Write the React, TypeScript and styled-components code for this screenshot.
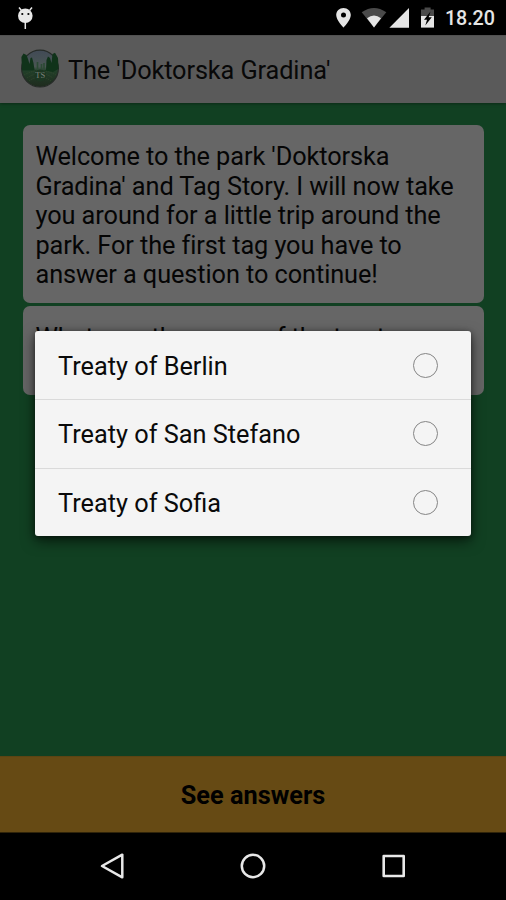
import React from 'react';
import styled, { createGlobalStyle } from 'styled-components';

const GlobalStyle = createGlobalStyle`
  * { box-sizing: border-box; }
  body { margin: 0; background: #000; font-family: Roboto, sans-serif; }
`;

const Screen = styled.div`
  position: relative;
  display: flex;
  flex-direction: column;
  width: 506px;
  height: 900px;
  overflow: hidden;
  background: #000;
`;

const StatusBar = styled.div`
  display: flex;
  justify-content: space-between;
  height: 35px;
  padding: 0 10px 0 16px;
  flex: none;
`;

const StatusIcons = styled.div`
  display: flex;
`;

const Clock = styled.span`
  width: 51px;
  font-size: 19.7px;
  font-weight: 500;
  line-height: 38px;
  letter-spacing: -0.1px;
  color: #e5e5e5;
  white-space: nowrap;
`;

const AppBar = styled.header`
  display: flex;
  align-items: center;
  gap: 8px;
  height: 67.5px;
  flex: none;
  padding-left: 20px;
  background: #5a5a5a;
  border-top: 1px solid #515151;
  box-shadow: 0 1px 3px rgba(0, 0, 0, 0.35);
  z-index: 1;
`;

const Title = styled.h1`
  margin: 3px 0 0;
  font-size: 25.3px;
  font-weight: 400;
  line-height: 30px;
  letter-spacing: -0.1px;
  color: #080808;
`;

const Content = styled.main`
  display: flex;
  flex-direction: column;
  gap: 3px;
  flex: 1;
  padding: 22.5px 22.5px 0;
  background: #114022;
`;

const Card = styled.p`
  min-height: 89px;
  margin: 0;
  padding: 17px 13px 13px;
  border-radius: 7px;
  background: #666;
  color: #050505;
  font-size: 25.3px;
  line-height: 29.6px;
  letter-spacing: -0.08px;
`;

const AnswersButton = styled.button`
  height: 77px;
  flex: none;
  border: 0;
  border-top: 1px solid #5c4413;
  border-bottom: 1px solid #30240a;
  padding: 2px 0 0;
  background: #664a14;
  color: #000;
  font: 700 25.3px Roboto, sans-serif;
`;

const NavBar = styled.nav`
  display: flex;
  align-items: center;
  justify-content: space-between;
  height: 67px;
  flex: none;
  padding: 0 98px 1px;
`;

const DialogLayer = styled.div`
  position: absolute;
  inset: 331px 35.5px auto 35px;
  z-index: 2;
`;

const Dialog = styled.div`
  display: flex;
  flex-direction: column;
  border-radius: 3px;
  background: #f4f4f4;
  box-shadow: 0 5px 14px rgba(0, 0, 0, 0.6), 0 1px 5px rgba(0, 0, 0, 0.4);
`;

const Option = styled.label`
  display: flex;
  align-items: center;
  justify-content: space-between;
  height: 68.3px;
  padding: 0 32.5px 0 23px;
  font-size: 25.3px;
  color: #0a0a0a;
  & + & { border-top: 1px solid #dadada; }
`;

const OptionText = styled.span`
  padding-top: 2px;
`;

const Radio = styled.span`
  width: 25px;
  height: 25px;
  border: 1.4px solid #858585;
  border-radius: 50%;
`;

function DebugIcon() {
  return (
    <svg width="20" height="35" viewBox="0 0 20 35">
      <path d="M3 7.5 5.5 10.5M16 7.5 13.5 10.5M9.3 22V29" stroke="#e8e8e8" strokeWidth="1.5" />
      <ellipse cx="9.3" cy="15.8" rx="7.3" ry="7.3" fill="#e8e8e8" />
      <circle cx="6.3" cy="14" r="1.1" />
      <circle cx="12.4" cy="14" r="1.1" />
    </svg>
  );
}

function SystemIcons() {
  return (
    <svg width="109" height="35" viewBox="336 0 109 35">
      <path fill="#e5e5e5" fillRule="evenodd" d="M343.5 8c-4.1 0-7.3 3.1-7.3 7.1 0 5.2 7.3 12.5 7.3 12.5s7.3-7.3 7.3-12.5c0-4-3.2-7.1-7.3-7.1zm0 4.6a2.5 2.5 0 1 1 0 5 2.5 2.5 0 0 1 0-5z" />
      <path fill="#4a4a4a" d="M361.7 12.3Q374 3.6 386.3 12.3L374 27.5z" />
      <path fill="#e5e5e5" d="M367 18.2Q374 12.6 381 18.2L374 27.5z" />
      <path fill="#e5e5e5" d="M409 8V27.7H389.4z" />
      <path fill="#4a4a4a" d="M421 9.4h3.6V7.5h6v1.9h3.4V17h-13z" />
      <path fill="#e5e5e5" d="M421 16h13v11.6h-13z" />
      <path fill="#000" d="M430.5 11.5 424 19.7h3l-1.7 5.8 6.5-8.2h-3.1z" />
    </svg>
  );
}

function ParkLogo() {
  return (
    <svg width="40" height="40" viewBox="0 0 40 40">
      <defs>
        <linearGradient id="sky" x1="0" y1="0" x2="0" y2="1">
          <stop offset="0" stopColor="#414a56" />
          <stop offset="0.45" stopColor="#4a5654" />
          <stop offset="0.56" stopColor="#213f29" />
          <stop offset="1" stopColor="#1e2a1d" />
        </linearGradient>
      </defs>
      <circle cx="20" cy="19.6" r="18.4" fill="url(#sky)" stroke="#262b28" strokeWidth="1.2" />
      <path fill="#10331a" d="M2 21.5 1.4 8 3.5 4.5 6.5 6 8 10 9.5 15 10.5 9 12 8.5 13.5 14 14.5 21H26L26.5 11 28 7.5 30 9 31.5 14 32.5 5 35 3.8 38 9 38.6 20 33 23 24 21.5 13 21.5z" />
      <path d="M17.5 20.5V13M21.5 20.5V15M24 20V14" stroke="#2b4a34" strokeWidth="1.6" />
      <path d="M4 26Q20 17 36 26M7 29Q20 20 33 29M9 32Q20 24 31 32" fill="none" stroke="#33482f" strokeWidth="0.8" strokeDasharray="1.5 1" />
      <circle cx="20.3" cy="26.5" r="6" fill="#1c3622" />
      <text x="20.3" y="29.3" textAnchor="middle" fontFamily="Liberation Serif, serif" fontSize="8.5" fill="#7b817b">TS</text>
    </svg>
  );
}

function BackIcon() {
  return (
    <svg width="28" height="30" viewBox="0 0 28 30">
      <path d="M24.3 3.7V26.3L4 15z" fill="none" stroke="#e8e8e8" strokeWidth="2.5" strokeLinejoin="round" />
    </svg>
  );
}

function HomeIcon() {
  return (
    <svg width="28" height="30" viewBox="0 0 28 30">
      <circle cx="14" cy="15" r="11.2" fill="none" stroke="#e8e8e8" strokeWidth="2.5" />
    </svg>
  );
}

function RecentsIcon() {
  return (
    <svg width="28" height="30" viewBox="0 0 28 30">
      <rect x="3.7" y="5" width="20" height="20" fill="none" stroke="#e8e8e8" strokeWidth="2.6" strokeLinejoin="round" />
    </svg>
  );
}

const answers = ['Treaty of Berlin', 'Treaty of San Stefano', 'Treaty of Sofia'];

export default function App() {
  return (
    <Screen>
      <GlobalStyle />
      <StatusBar>
        <DebugIcon />
        <StatusIcons>
          <SystemIcons />
          <Clock>18.20</Clock>
        </StatusIcons>
      </StatusBar>
      <AppBar>
        <ParkLogo />
        <Title>The 'Doktorska Gradina'</Title>
      </AppBar>
      <Content>
        <Card>
          Welcome to the park 'Doktorska Gradina' and Tag Story. I will now take you around for a little trip
          around the park. For the first tag you have to answer a question to continue!
        </Card>
        <Card>What was the name of the treaty</Card>
      </Content>
      <AnswersButton>See answers</AnswersButton>
      <NavBar>
        <BackIcon />
        <HomeIcon />
        <RecentsIcon />
      </NavBar>
      <DialogLayer>
        <Dialog role="dialog">
          {answers.map((answer) => (
            <Option key={answer}>
              <OptionText>{answer}</OptionText>
              <Radio />
            </Option>
          ))}
        </Dialog>
      </DialogLayer>
    </Screen>
  );
}
